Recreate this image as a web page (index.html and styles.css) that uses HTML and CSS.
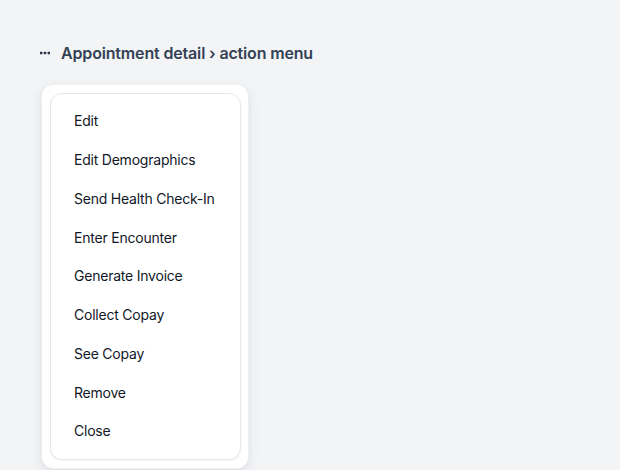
FILE: index.html
```html
<!DOCTYPE html>
<html lang="en">
<head>
<meta charset="utf-8">
<title>Appointment detail › action menu</title>
<link rel="stylesheet" href="styles.css">
</head>
<body>
<main class="page">
  <h1 class="title">
    <svg class="dots" width="10" height="4" viewBox="0 0 10 4" aria-hidden="true">
      <rect x="0" y="0.8" width="2.4" height="2.4" rx="0.5" fill="#273244"/>
      <rect x="3.8" y="0.8" width="2.4" height="2.4" rx="0.5" fill="#273244"/>
      <rect x="7.6" y="0.8" width="2.4" height="2.4" rx="0.5" fill="#273244"/>
    </svg>
    <span>Appointment detail › action menu</span>
  </h1>
  <div class="card">
    <ul class="menu">
      <li class="item">Edit</li>
      <li class="item">Edit Demographics</li>
      <li class="item">Send Health Check-In</li>
      <li class="item">Enter Encounter</li>
      <li class="item">Generate Invoice</li>
      <li class="item">Collect Copay</li>
      <li class="item">See Copay</li>
      <li class="item">Remove</li>
      <li class="item">Close</li>
    </ul>
  </div>
</main>
</body>
</html>
```
FILE: styles.css
```css
* { box-sizing: border-box; }
html, body { margin: 0; padding: 0; }
body {
  background: #f3f4f6;
  font-family: Inter, "Noto Sans", "Liberation Sans", sans-serif;
  color: #111827;
  width: 620px;
  height: 470px;
  overflow: hidden;
}
.page {
  padding: 41px 40px 0 40px;
  display: flex;
  flex-direction: column;
  align-items: flex-start;
}
.title {
  margin: 0;
  display: flex;
  align-items: center;
  gap: 11px;
  font-size: 16px;
  line-height: 24px;
  font-weight: 600;
  letter-spacing: -0.16px;
  color: #334155;
}
.dots { display: block; margin-top: -1px; }
.card {
  margin-top: 19px;
  margin-left: 1px;
  width: 208px;
  padding: 8px 7px 8px 8px;
  background: #ffffff;
  border: 1px solid #eef0f3;
  border-radius: 12px;
  box-shadow: 0 4px 14px rgba(15, 23, 42, 0.07), 0 1px 3px rgba(15, 23, 42, 0.05);
}
.menu {
  list-style: none;
  margin: 0;
  padding: 8px;
  background: #ffffff;
  border: 1px solid #e5e7eb;
  border-radius: 12px;
  box-shadow: 0 1px 2px rgba(15, 23, 42, 0.05);
  display: flex;
  flex-direction: column;
}
.item {
  padding: 9.375px 16px 9.375px 15px;
  font-size: 14px;
  line-height: 20px;
  letter-spacing: -0.22px;
  color: #111827;
  white-space: nowrap;
}
```
